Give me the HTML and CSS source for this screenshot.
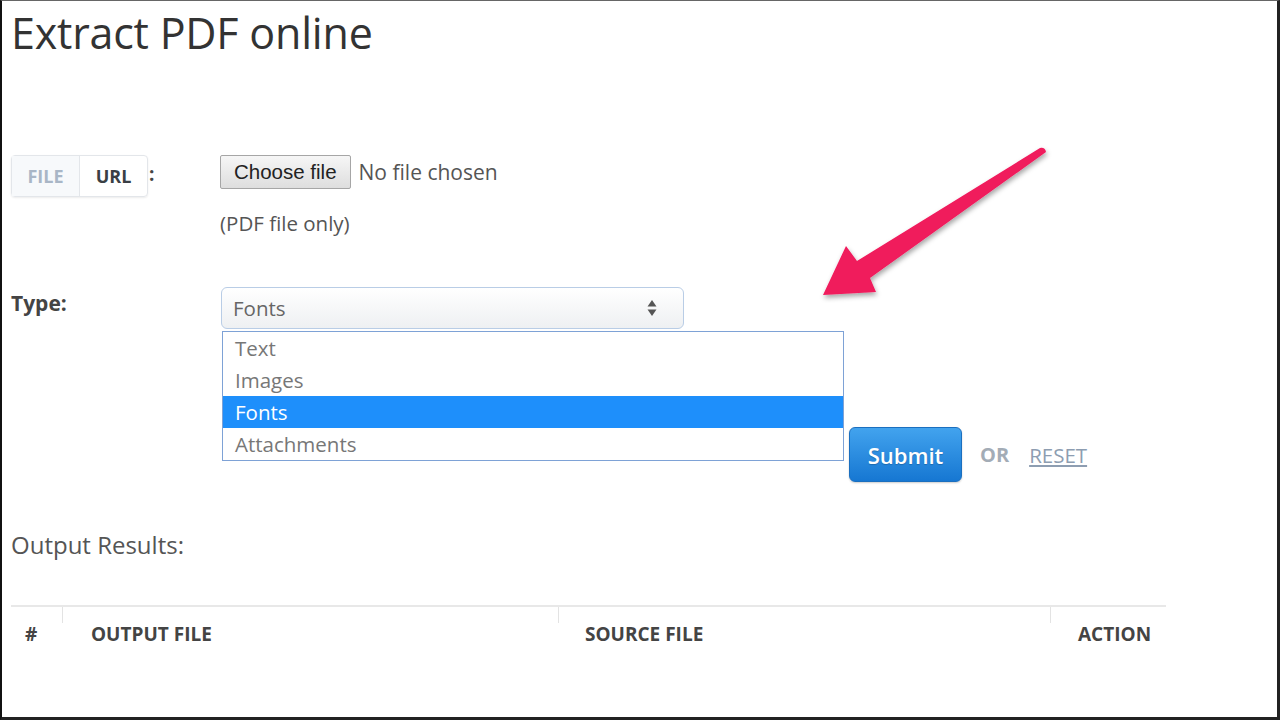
FILE: index.html
```html
<!DOCTYPE html>
<html lang="en">

<head>
    <meta charset="UTF-8">
    <title>Extract PDF online</title>
    <link rel="stylesheet" href="styles.css">
</head>

<body>
    <div class="frame">
        <h1 class="page-title">Extract PDF online</h1>

        <!-- source row -->
        <div class="form-row source-row">
            <div class="label-col">
                <div class="toggle">
                    <span class="toggle-item toggle-file">FILE</span>
                    <span class="toggle-item toggle-url">URL</span>
                </div>
                <span class="colon">:</span>
            </div>
            <div class="field-col">
                <div class="file-input">
                    <span class="file-btn">Choose file</span>
                    <span class="file-name">No file chosen</span>
                </div>
                <div class="hint">(PDF file only)</div>
            </div>
        </div>

        <!-- type row -->
        <div class="form-row type-row">
            <div class="label-col">
                <span class="type-label">Type:</span>
            </div>
            <div class="field-col">
                <div class="select-wrap">
                    <div class="select-box">
                        <span>Fonts</span>
                        <span class="select-arrows">
                            <svg width="10" height="16" viewBox="0 0 10 16">
                                <path d="M5 0 L9.5 6.5 L0.5 6.5 Z" fill="#555" />
                                <path d="M5 16 L9.5 9.5 L0.5 9.5 Z" fill="#555" />
                            </svg>
                        </span>
                    </div>
                    <ul class="select-list">
                        <li>Text</li>
                        <li>Images</li>
                        <li class="active">Fonts</li>
                        <li>Attachments</li>
                    </ul>
                </div>
            </div>
        </div>

        <!-- actions -->
        <div class="actions">
            <button class="submit-btn" type="button">Submit</button>
            <span class="or">OR</span>
            <a class="reset" href="#">RESET</a>
        </div>

        <div class="output-title">Output Results:</div>

        <table class="results">
            <thead>
                <tr>
                    <th class="col-num">#</th>
                    <th class="col-out">OUTPUT FILE</th>
                    <th class="col-src">SOURCE FILE</th>
                    <th class="col-act">ACTION</th>
                </tr>
            </thead>
        </table>

        <!-- annotation arrow -->
        <svg class="arrow" width="260" height="180" viewBox="800 130 260 180">
            <defs>
                <filter id="shadow" x="-20%" y="-20%" width="140%" height="140%">
                    <feDropShadow dx="1" dy="3" stdDeviation="2.5" flood-color="#000" flood-opacity="0.35" />
                </filter>
            </defs>
            <path d="M823 295 L846 246 L857 261 L1040 148 Q1045 147 1046 152 L870 278 L876 292 Z"
                fill="#f01a5c" filter="url(#shadow)" />
        </svg>
    </div>
</body>

</html>
```

FILE: styles.css
```css
/* page frame */
html,
body {
    margin: 0;
    padding: 0;
    background: #fff;
}

.frame {
    position: relative;
    width: 1280px;
    height: 720px;
    box-sizing: border-box;
    border-left: 2px solid #111;
    border-top: 1px solid #666;
    border-right: 3px solid #222;
    border-bottom: 3px solid #222;
    padding-left: 9px;
    font-family: "Open Sans", "Liberation Sans", sans-serif;
    color: #444;
    overflow: hidden;
}

/* title */
.page-title {
    margin: 0;
    padding-top: 4px;
    font-size: 43px;
    font-weight: 400;
    letter-spacing: -0.2px;
    color: #333;
    line-height: 56px;
}

/* form rows */
.form-row {
    display: flex;
}

.label-col {
    width: 209px;
    display: flex;
    align-items: flex-start;
}

.field-col {
    flex: 1;
}

.source-row {
    margin-top: 94px;
}

/* FILE / URL switch */
.toggle {
    display: flex;
    border: 1px solid #e3e6ea;
    border-radius: 4px;
    box-shadow: 0 1px 2px rgba(0, 0, 0, 0.08);
    height: 40px;
}

.toggle-item {
    width: 67px;
    display: flex;
    align-items: center;
    justify-content: center;
    font-size: 18px;
    font-weight: 700;
}

.toggle-file {
    color: #a9b6c6;
    background: #f7f9fb;
    border-right: 1px solid #e3e6ea;
}

.toggle-url {
    color: #3a3f45;
}

.colon {
    margin-left: 1px;
    margin-top: 6px;
    font-size: 19px;
    font-weight: 700;
}

/* file chooser */
.file-input {
    display: flex;
    align-items: center;
    height: 34px;
}

.file-btn {
    display: inline-flex;
    align-items: center;
    height: 32px;
    padding: 0 13px;
    border: 1px solid #a6a6a6;
    border-radius: 2px;
    background: linear-gradient(#f6f6f6, #dedede);
    font-family: "Liberation Sans", Arial, sans-serif;
    font-size: 20.5px;
    color: #222;
}

.file-name {
    margin-left: 8px;
    font-size: 21px;
    color: #555;
}

.hint {
    margin-top: 20px;
    font-size: 20.5px;
    color: #555;
}

/* type select */
.type-row {
    margin-top: 50px;
}

.type-label {
    margin-top: 2px;
    font-size: 21px;
    font-weight: 700;
    color: #444;
}

.select-wrap {
    position: relative;
    width: 463px;
    margin-left: 1px;
}

.select-box {
    display: flex;
    align-items: center;
    justify-content: space-between;
    height: 40px;
    padding: 0 26px 0 11px;
    border: 1px solid #b9cde6;
    border-radius: 6px;
    background: linear-gradient(#fff, #eef0f2);
    font-size: 20.5px;
    color: #666;
}

.select-arrows {
    display: flex;
}

/* open dropdown list */
.select-list {
    position: absolute;
    left: 1px;
    top: 44px;
    width: 620px;
    margin: 0;
    padding: 0;
    list-style: none;
    border: 1px solid #7ea2d6;
    background: #fff;
    z-index: 2;
}

.select-list li {
    height: 32px;
    line-height: 32px;
    padding-left: 12px;
    font-size: 20.5px;
    color: #777;
}

.select-list li.active {
    background: #1e8ffb;
    color: #fff;
}

/* submit row */
.actions {
    display: flex;
    align-items: center;
    margin-top: 98px;
    margin-left: 838px;
}

.submit-btn {
    width: 113px;
    height: 55px;
    border: 1px solid #1b6fbf;
    border-radius: 6px;
    background: linear-gradient(#42a3ee, #1677d2);
    color: #fff;
    font-family: "Open Sans", sans-serif;
    font-size: 22px;
    font-weight: 600;
    text-shadow: 0 1px 1px rgba(0, 0, 0, 0.2);
    box-shadow: 0 1px 2px rgba(0, 0, 0, 0.2);
}

.or {
    margin-left: 18px;
    font-size: 20px;
    font-weight: 700;
    color: #a3acb6;
}

.reset {
    margin-left: 20px;
    font-size: 20.5px;
    color: #8d9db1;
    text-decoration: underline;
}

/* output table */
.output-title {
    margin-top: 46px;
    font-size: 24px;
    color: #555;
}

.results {
    margin-top: 44px;
    width: 1155px;
    table-layout: fixed;
    border-collapse: collapse;
    border-top: 2px solid #e8e8e8;
}

.results th {
    position: relative;
    box-sizing: border-box;
    height: 54px;
    padding: 0;
    text-align: left;
    font-size: 19px;
    font-weight: 700;
    color: #444;
    vertical-align: middle;
}

.results th+th::before {
    content: "";
    position: absolute;
    left: 0;
    top: 0;
    height: 16px;
    border-left: 1px solid #e3e3e3;
}

.col-num {
    width: 51px;
    padding-left: 14px !important;
}

.col-out {
    width: 496px;
    padding-left: 29px !important;
}

.col-src {
    width: 492px;
    padding-left: 27px !important;
}

.col-act {
    padding-left: 28px !important;
}

/* annotation arrow */
.arrow {
    position: absolute;
    left: 798px;
    top: 129px;
}
```
